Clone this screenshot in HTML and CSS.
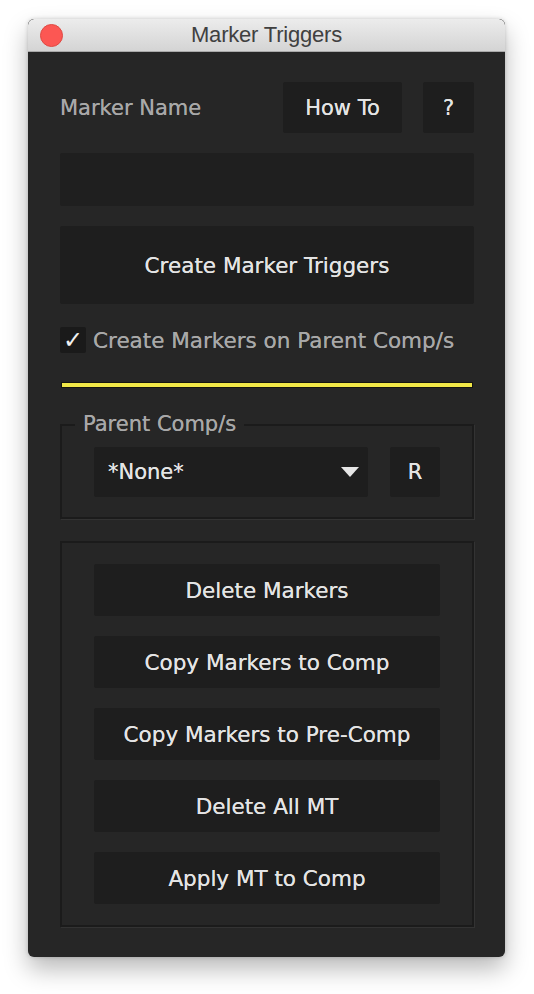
FILE: index.html
```html
<!DOCTYPE html>
<html>
<head>
<meta charset="utf-8">
<link rel="stylesheet" href="styles.css">
</head>
<body>
<div class="window">
  <div class="titlebar">
    <span class="close"></span>
    <span class="title">Marker Triggers</span>
  </div>
  <div class="content">
    <div class="header-row">
      <span class="label">Marker Name</span>
      <div class="header-buttons">
        <div class="btn btn-howto">How To</div>
        <div class="btn btn-help">?</div>
      </div>
    </div>
    <div class="text-field"></div>
    <div class="btn btn-create">Create Marker Triggers</div>
    <div class="check-row">
      <span class="checkbox">✓</span>
      <span class="label">Create Markers on Parent Comp/s</span>
    </div>
    <div class="yellow-line"></div>
    <div class="group group-parent">
      <span class="group-label">Parent Comp/s</span>
      <div class="parent-row">
        <div class="dropdown">
          <span>*None*</span>
          <span class="arrow"></span>
        </div>
        <div class="btn btn-r">R</div>
      </div>
    </div>
    <div class="group group-actions">
      <div class="btn btn-action">Delete Markers</div>
      <div class="btn btn-action">Copy Markers to Comp</div>
      <div class="btn btn-action">Copy Markers to Pre-Comp</div>
      <div class="btn btn-action">Delete All MT</div>
      <div class="btn btn-action">Apply MT to Comp</div>
    </div>
  </div>
</div>
</body>
</html>
```
FILE: styles.css
```css
html, body {
  margin: 0;
  padding: 0;
  background: #ffffff;
}

body {
  width: 534px;
  height: 994px;
  overflow: hidden;
  font-family: "DejaVu Sans", "Noto Sans", sans-serif;
}

.window {
  margin: 19px 0 0 28px;
  width: 477px;
  height: 938px;
  border-radius: 6px;
  background: #262626;
  box-shadow: 0 12px 24px rgba(0, 0, 0, 0.28), 0 0 4px rgba(0, 0, 0, 0.18);
  overflow: hidden;
  display: flex;
  flex-direction: column;
}

.titlebar {
  height: 32px;
  flex: none;
  background: linear-gradient(#ececec, #d4d4d4);
  border-bottom: 1px solid #a9a9a9;
  border-radius: 6px 6px 0 0;
  display: flex;
  align-items: center;
  justify-content: center;
  position: relative;
}

.close {
  position: absolute;
  left: 12px;
  top: 5px;
  width: 21px;
  height: 21px;
  border-radius: 50%;
  background: #fc5753;
  border: 1px solid #de4a43;
}

.title {
  font-family: "Liberation Sans", Arial, sans-serif;
  font-size: 22px;
  color: #404040;
  letter-spacing: -0.2px;
}

.content {
  flex: 1;
  display: flex;
  flex-direction: column;
  padding: 30px 31px 0 32px;
}

.label {
  color: #a8a8a8;
  font-size: 21px;
  text-shadow: 0 0 0.4px #a8a8a8;
}

.btn {
  background: #1e1e1e;
  color: #e4e4e4;
  font-size: 21px;
  display: flex;
  align-items: center;
  justify-content: center;
  border-radius: 2px;
  text-shadow: 0 0 0.4px #e4e4e4;
}

.header-row {
  display: flex;
  align-items: center;
  justify-content: space-between;
  height: 51px;
}

.header-buttons {
  display: flex;
  gap: 21px;
  height: 51px;
}

.btn-howto {
  width: 119px;
}

.btn-help {
  width: 51px;
}

.text-field {
  margin-top: 20px;
  height: 53px;
  background: #1f1f1f;
  border-radius: 2px;
}

.btn-create {
  margin-top: 20px;
  height: 78px;
  font-size: 21.5px;
}

.check-row {
  margin-top: 23px;
  display: flex;
  align-items: center;
  gap: 7px;
  height: 26px;
}

.checkbox {
  width: 26px;
  height: 26px;
  background: #1a1a1a;
  color: #f2f2f2;
  font-size: 24px;
  font-weight: bold;
  display: flex;
  align-items: center;
  justify-content: center;
  border-radius: 2px;
}

.check-row .label {
  font-size: 21.5px;
}

.yellow-line {
  margin: 30px 2px 0 2px;
  height: 4px;
  background: #f1e847;
  box-shadow: 0 0 0 1px #151510;
}

.group {
  border: 2px solid #1b1b1b;
  box-shadow: 1px 1px 0 #333333;
  position: relative;
}

.group-parent {
  margin-top: 37px;
  height: 95px;
  box-sizing: border-box;
  padding: 21px 32px 0 32px;
}

.group-label {
  position: absolute;
  top: -15px;
  left: 13px;
  padding: 0 8px;
  background: #262626;
  color: #a8a8a8;
  font-size: 21px;
  line-height: 26px;
  text-shadow: 0 0 0.4px #a8a8a8;
}

.parent-row {
  display: flex;
  gap: 22px;
  height: 50px;
}

.dropdown {
  width: 275px;
  background: #1e1e1e;
  color: #e4e4e4;
  font-size: 21px;
  display: flex;
  align-items: center;
  justify-content: space-between;
  padding: 0 9px 0 14px;
  box-sizing: border-box;
  border-radius: 2px;
  text-shadow: 0 0 0.4px #e4e4e4;
}

.arrow {
  width: 0;
  height: 0;
  border-left: 9px solid transparent;
  border-right: 9px solid transparent;
  border-top: 10px solid #e6e6e6;
}

.btn-r {
  width: 50px;
}

.group-actions {
  margin-top: 22px;
  height: 386px;
  box-sizing: border-box;
  padding: 21px 32px 0 32px;
  display: flex;
  flex-direction: column;
  gap: 20px;
}

.btn-action {
  height: 52px;
  flex: none;
  font-size: 21.5px;
}
```
